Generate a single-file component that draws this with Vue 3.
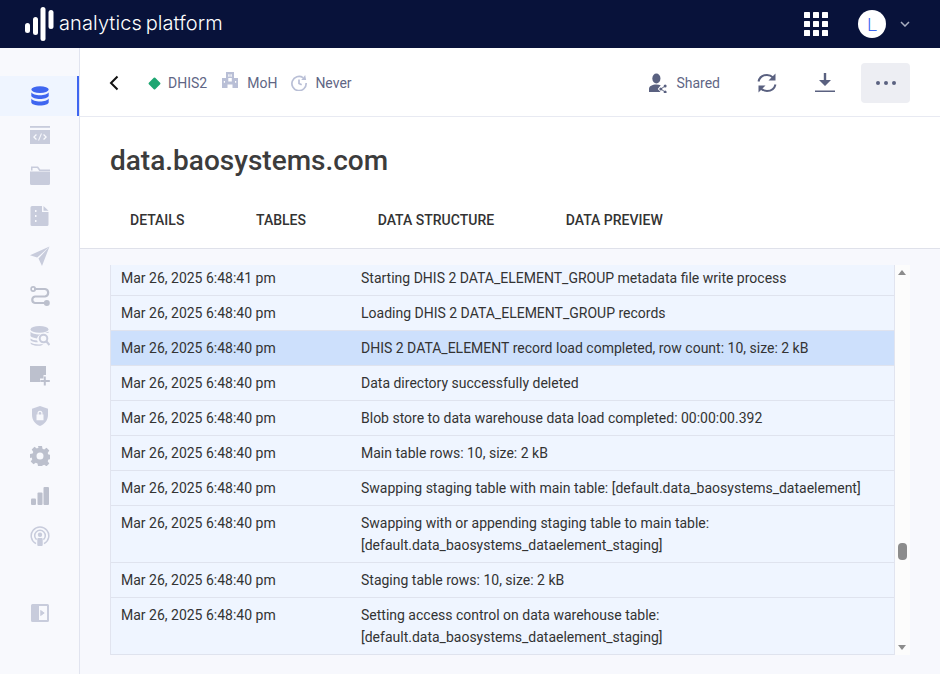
<script setup>
const navItems = [
  { name: 'data', active: true },
  { name: 'code' },
  { name: 'folder' },
  { name: 'file' },
  { name: 'send' },
  { name: 'route', muted: true },
  { name: 'search' },
  { name: 'add', muted: true },
  { name: 'shield' },
  { name: 'gear', muted: true },
  { name: 'bars', muted: true },
  { name: 'cast' }
]

const tabs = ['Details', 'Tables', 'Data structure', 'Data preview']

const rows = [
  { time: 'Mar 26, 2025 6:48:41 pm', text: 'Starting DHIS 2 DATA_ELEMENT_GROUP metadata file write process' },
  { time: 'Mar 26, 2025 6:48:40 pm', text: 'Loading DHIS 2 DATA_ELEMENT_GROUP records' },
  { time: 'Mar 26, 2025 6:48:40 pm', text: 'DHIS 2 DATA_ELEMENT record load completed, row count: 10, size: 2 kB', selected: true },
  { time: 'Mar 26, 2025 6:48:40 pm', text: 'Data directory successfully deleted' },
  { time: 'Mar 26, 2025 6:48:40 pm', text: 'Blob store to data warehouse data load completed: 00:00:00.392' },
  { time: 'Mar 26, 2025 6:48:40 pm', text: 'Main table rows: 10, size: 2 kB' },
  { time: 'Mar 26, 2025 6:48:40 pm', text: 'Swapping staging table with main table: [default.data_baosystems_dataelement]' },
  { time: 'Mar 26, 2025 6:48:40 pm', text: 'Swapping with or appending staging table to main table: [default.data_baosystems_dataelement_staging]' },
  { time: 'Mar 26, 2025 6:48:40 pm', text: 'Staging table rows: 10, size: 2 kB' },
  { time: 'Mar 26, 2025 6:48:40 pm', text: 'Setting access control on data warehouse table: [default.data_baosystems_dataelement_staging]' }
]
</script>

<template>
  <div class="app">
    <header class="topbar">
      <div class="brand">
        <svg class="brand-mark" width="30" height="36" viewBox="0 0 30 36" fill="#fff">
          <rect x="0" y="17" width="5" height="10" rx="2.5" />
          <rect x="8" y="11" width="5" height="18" rx="2.5" />
          <rect x="15.5" y="1" width="5" height="34" rx="2.5" />
          <rect x="23.5" y="4" width="5" height="19" rx="2.5" />
        </svg>
        <span class="brand-name">analytics platform</span>
      </div>
      <div class="top-right">
        <svg class="apps" width="24" height="24" viewBox="0 0 24 24" fill="#fff">
          <template v-for="y in [0, 9, 18]" :key="y">
            <rect v-for="x in [0, 9, 18]" :key="x" :x="x" :y="y" width="6" height="6" rx="0.6" />
          </template>
        </svg>
        <div class="avatar">L</div>
        <svg class="caret" width="10" height="6" viewBox="0 0 10 6" fill="none" stroke="#a9aec0" stroke-width="1.5">
          <path d="M1 1l4 4 4-4" />
        </svg>
      </div>
    </header>

    <div class="body">
      <nav class="sidebar">
        <div class="nav-list">
          <div v-for="item in navItems" :key="item.name" class="nav-item" :class="{ active: item.active, muted: item.muted }">
            <svg width="20" height="20" viewBox="0 0 20 20" fill="currentColor">
              <template v-if="item.name === 'data'">
                <ellipse cx="10" cy="3.6" rx="8.7" ry="3.4" />
                <path d="M1.3 6.2c1 2 4.600 3 8.700 3s7.700-1 8.700-3v3.900c-1 2-4.600 3-8.700 3s-7.700-1-8.700-3z" />
                <path d="M1.300 12.400c1 2 4.600 3 8.700 3s7.700-1 8.700-3v3.800c0 1.900-3.900 3.300-8.700 3.300s-8.700-1.400-8.700-3.300z" />
              </template>
              <template v-else-if="item.name === 'code'">
                <rect x="0" y="0" width="20" height="1.800" />
                <path fill-rule="evenodd" d="M0 4h20v14H0zM6 8l-3 3 3 3 .9-.9L4.800 11l2.100-2.100zM14 8l-.9.900 2.100 2.100-2.100 2.100.9.900 3-3zM10.900 7.500L8 14.500h1.100l2.900-7z" />
              </template>
              <template v-else-if="item.name === 'folder'">
                <path d="M1 1h7l2.300 3H20v1.500H9.300L7.200 2.500H2.500V5H1zM0 6h20v12a1.500 1.500 0 0 1-1.500 1.500h-17A1.500 1.500 0 0 1 0 18zM0 6h1v2H0z" transform="translate(0 -.5)" />
              </template>
              <template v-else-if="item.name === 'file'">
                <path fill-rule="evenodd" d="M2 0h10v6h6.500v12.500A1.500 1.500 0 0 1 17 20H2a1.500 1.500 0 0 1-1.500-1.500v-17A1.500 1.500 0 0 1 2 0zM5 4v2h1.500V4zM5 9v2h1.500V9zM5 14v2h1.500v-2z" />
                <path d="M13.500 0l5 4.800h-5z" />
              </template>
              <template v-else-if="item.name === 'send'">
                <path d="M19.500 0.500L0 9.300l7.200 2.300zM19.500 0.500L8.500 12.600l3.500 7.400z" />
              </template>
              <template v-else-if="item.name === 'route'">
                <path d="M4 3h11a3.800 3.800 0 0 1 0 7.500H5a3.300 3.300 0 0 0 0 6.500h10" fill="none" stroke="currentColor" stroke-width="2.200" />
                <circle cx="3.200" cy="3" r="2.100" fill="none" stroke="currentColor" stroke-width="1.600" />
                <circle cx="16.800" cy="17" r="3" />
              </template>
              <template v-else-if="item.name === 'search'">
                <ellipse cx="9.500" cy="3.400" rx="9" ry="3.400" />
                <path d="M.5 5.800c1.500 1.700 5 2.700 8.500 2.700.5 0 1 0 1.500-.1-1.800.7-3.100 2.200-3.500 4-3-.2-5.400-1-6.500-2.300z" />
                <path d="M18.500 5.800V7c-1-.4-2.200-.6-3.500-.6z" />
                <path d="M.5 12.400c1.400 1.200 3.800 1.900 6.500 2l.9 1.900c-3.100 0-6-.8-7.400-2.100z" />
                <path d="M.5 16.400c1.600 1.300 5 2 8.500 2 1.500 0 3-.1 4.300-.4-1 1.300-3 1.800-4.300 1.800-4 0-8.500-1.200-8.500-2.900z" />
                <circle cx="13.500" cy="12.500" r="3.800" fill="none" stroke="currentColor" stroke-width="2" />
                <path d="M16.300 15.300l3.200 3.700" stroke="currentColor" stroke-width="2.200" />
              </template>
              <template v-else-if="item.name === 'add'">
                <path d="M0 0h16v9h-2.500v3.500H10V16H0z" />
                <path d="M14.800 10.500v9M10.300 15h9.500" fill="none" stroke="currentColor" stroke-width="2" />
              </template>
              <template v-else-if="item.name === 'shield'">
                <path fill-rule="evenodd" d="M10 0l8 2.800V9c0 5-3.200 9-8 11-4.800-2-8-6-8-11V2.800zM6.500 8.500v5.800h7V8.500h-1V7.200a2.500 2.500 0 0 0-5 0v1.300zM8.700 8.500V7.200a1.300 1.300 0 0 1 2.600 0v1.300z" />
              </template>
              <template v-else-if="item.name === 'gear'">
                <path fill-rule="evenodd" d="M8 0h4l.5 2.700 1.700.7 2.300-1.600 2.800 2.800-1.600 2.300.7 1.700 2.600.4v4l-2.600.5-.7 1.700 1.600 2.300-2.800 2.800-2.300-1.600-1.700.7L12 20H8l-.5-2.600-1.700-.7-2.300 1.600-2.800-2.800 1.600-2.300-.7-1.700L0 12V8l2.600-.4.700-1.700-1.600-2.300 2.800-2.800 2.300 1.600 1.700-.7zM10 6.500a3.500 3.500 0 1 0 0 7 3.500 3.500 0 0 0 0-7z" />
              </template>
              <template v-else-if="item.name === 'bars'">
                <rect x="1" y="12.500" width="5" height="6.500" rx="1" />
                <rect x="7.500" y="6.500" width="5" height="12.500" rx="1" />
                <rect x="13.500" y="1" width="5.500" height="18" rx="1" />
              </template>
              <template v-else>
                <path d="M6 17.700A8.800 8.800 0 1 1 14 17.700" fill="none" stroke="currentColor" stroke-width="1.500" />
                <path d="M6.600 13.700A5.300 5.300 0 1 1 13.400 13.700" fill="none" stroke="currentColor" stroke-width="1.500" />
                <circle cx="10" cy="8.800" r="2.200" />
                <rect x="7.300" y="12" width="5.400" height="8" rx="1" />
              </template>
            </svg>
          </div>
        </div>
        <div class="nav-item collapse">
          <svg width="18" height="18" viewBox="0 0 18 18" fill="currentColor">
            <path fill-rule="evenodd" d="M1.500 0h15A1.500 1.500 0 0 1 18 1.500v15a1.500 1.500 0 0 1-1.500 1.500h-15A1.500 1.500 0 0 1 0 16.500v-15A1.500 1.500 0 0 1 1.500 0zM8 2v14h8V2zM9.500 6l4 3-4 3z" />
            <path d="M9.500 6l4 3-4 3z" />
          </svg>
        </div>
      </nav>

      <main class="main">
        <div class="toolbar">
          <div class="crumbs">
            <svg class="back" width="10" height="16" viewBox="0 0 10 16" fill="none" stroke="#111" stroke-width="2">
              <path d="M8.500 1.500L2 8l6.500 6.500" />
            </svg>
            <span class="crumb first">
              <i class="diamond"></i>
              DHIS2
            </span>
            <span class="crumb moh">
              <svg width="16" height="16" viewBox="0 0 16 16" fill="#b9bfd6">
                <path fill-rule="evenodd" d="M4 0h8v6h4v10h-5.500v-3.500h-5V16H0V6h4zM6.300 2.200v2.500h1.200V2.200zM8.500 2.200v2.500h1.200V2.200zM6.300 6v3.500h3.500V6zM1.800 9v1.800H3V9zM13 9v1.800h1.200V9z" />
              </svg>
              MoH
            </span>
            <span class="crumb never">
              <svg width="16" height="16" viewBox="0 0 18 18" fill="none" stroke="#b9bfd6" stroke-width="1.900">
                <path d="M13.500 3A8 8 0 1 0 17 9" />
                <path d="M9 5v4.500l3 1.500" />
                <path d="M11.500 5.500L17 5.500 16 0z" fill="#b9bfd6" stroke="none" />
              </svg>
              Never
            </span>
          </div>
          <div class="actions">
            <span class="action-shared">
              <svg width="18" height="20" viewBox="0 0 19.500 20" preserveAspectRatio="none" fill="#5a6180">
                <ellipse cx="8" cy="5.500" rx="4.400" ry="5" />
                <path d="M0 19v-3c0-3 3.500-4.500 8-4.500 1.800 0 3.400.2 4.700.7l-3.200 3.800 3 3z" />
                <circle cx="17.500" cy="13" r="1.600" />
                <circle cx="17.500" cy="19" r="1.600" />
                <circle cx="12.800" cy="16" r="1.600" />
                <path d="M17.500 13l-4.700 3 4.700 3" fill="none" stroke="#5a6180" stroke-width="1" />
              </svg>
              Shared
            </span>
            <button class="icon-btn sync">
              <svg width="20" height="20" viewBox="0 0 20 20" fill="none" stroke="#5a6180" stroke-width="2">
                <path d="M1.500 8.500C2.500 4.500 5.800 2 10 2c2.500 0 4.500 1 6 2.500" />
                <path d="M18.500 11.500C17.500 15.500 14.200 18 10 18c-2.500 0-4.500-1-6-2.500" />
                <path d="M18.500 .5v7h-7z" fill="#5a6180" stroke="none" />
                <path d="M1.500 19.500v-7h7z" fill="#5a6180" stroke="none" />
              </svg>
            </button>
            <button class="icon-btn download">
              <svg width="20" height="20" viewBox="0 0 20 20" fill="#5a6180">
                <path d="M8.800 0h2.400v7H16l-6 6-6-6h4.800z" />
                <rect x="0" y="17.500" width="20" height="1.500" />
              </svg>
            </button>
            <button class="more">
              <i></i><i></i><i></i>
            </button>
          </div>
        </div>

        <div class="heading">
          <h1>data.baosystems.com</h1>
          <div class="tabs">
            <span v-for="tab in tabs" :key="tab" class="tab">{{ tab }}</span>
          </div>
        </div>

        <div class="log-area">
          <div class="log">
            <div class="rows">
              <div v-for="(row, i) in rows" :key="i" class="row" :class="{ selected: row.selected }">
                <div class="time">{{ row.time }}</div>
                <div class="text">{{ row.text }}</div>
              </div>
            </div>
            <div class="scrollbar">
              <i class="arrow up"></i>
              <i class="thumb"></i>
              <i class="arrow down"></i>
            </div>
          </div>
        </div>
      </main>
    </div>
  </div>
</template>

<style scoped>
.app {
  width: 940px;
  height: 674px;
  display: flex;
  flex-direction: column;
  overflow: hidden;
  font-family: Roboto, "Liberation Sans", sans-serif;
  font-size: 14px;
  color: #333;
  background: #fff;
}

.topbar {
  height: 48px;
  flex-shrink: 0;
  background: #08123a;
  display: flex;
  align-items: center;
  justify-content: space-between;
}

.brand {
  display: flex;
  align-items: center;
  padding-left: 25px;
}

.brand-mark {
  flex-shrink: 0;
}

.brand-name {
  margin-left: 4px;
  font-family: Inter, sans-serif;
  font-weight: 300;
  font-size: 20px;
  letter-spacing: 0.1px;
  word-spacing: -2px;
  color: #fff;
  position: relative;
  top: -1px;
}

.top-right {
  display: flex;
  align-items: center;
  padding-right: 30px;
}

.avatar {
  width: 28px;
  height: 28px;
  margin-left: 30px;
  border-radius: 50%;
  background: #fff;
  color: #3f66f0;
  font-size: 19px;
  font-weight: 300;
  display: flex;
  align-items: center;
  justify-content: center;
}

.caret {
  margin-left: 14px;
}

.body {
  flex: 1;
  display: flex;
  min-height: 0;
}

.sidebar {
  width: 80px;
  flex-shrink: 0;
  box-sizing: border-box;
  background: #f8f9fd;
  border-right: 1px solid #e1e4ef;
  padding-top: 28px;
  display: flex;
  flex-direction: column;
}

.nav-item {
  height: 40px;
  display: flex;
  align-items: center;
  justify-content: center;
  padding-left: 1px;
  box-sizing: border-box;
  color: #c8ccdc;
}

.nav-item.muted {
  color: #bcc0cd;
}

.nav-item.active {
  background: #eff5ff;
  color: #3f66f0;
  box-shadow: inset -2px 0 0 #3f66f0;
}

.collapse {
  margin-top: 37px;
}

.main {
  flex: 1;
  min-width: 0;
  display: flex;
  flex-direction: column;
}

.toolbar {
  height: 69px;
  flex-shrink: 0;
  box-sizing: border-box;
  border-bottom: 1px solid #e8eaf2;
  display: flex;
  align-items: center;
  justify-content: space-between;
  padding: 2px 30px 0 29px;
}

.crumbs,
.actions,
.crumb,
.action-shared {
  display: flex;
  align-items: center;
}

.back {
  margin-right: 29px;
}

.crumb {
  gap: 8px;
  margin-right: 14px;
  color: #5f6685;
}

.crumb.first {
  margin-right: 15px;
}

.crumb.moh {
  gap: 9px;
}

.crumb.moh svg {
  margin-bottom: 6px;
}

.crumb.never svg {
  margin-bottom: 1px;
}

.diamond {
  width: 9px;
  height: 9px;
  margin: 0 1px 0 2px;
  background: #1ea672;
  border-radius: 1px;
  transform: rotate(45deg);
}

.action-shared {
  gap: 9px;
  color: #5f6685;
}

.icon-btn {
  background: none;
  border: 0;
  padding: 0;
  display: flex;
}

.sync {
  margin-left: 37px;
}

.download {
  margin-left: 38px;
}

.more {
  width: 49px;
  height: 40px;
  margin-left: 26px;
  border: 0;
  border-radius: 4px;
  background: #edeef3;
  display: flex;
  align-items: center;
  justify-content: center;
  gap: 4px;
}

.more i {
  width: 4px;
  height: 4px;
  border-radius: 50%;
  background: #5a6180;
}

.heading {
  height: 132px;
  flex-shrink: 0;
  box-sizing: border-box;
  border-bottom: 1px solid #dfe1ea;
  padding: 28px 0 0 30px;
}

h1 {
  margin: 0;
  height: 32px;
  line-height: 32px;
  font-size: 28px;
  font-weight: 500;
  color: #3c3c3c;
}

.tabs {
  display: flex;
  gap: 71.7px;
  padding: 33px 0 0 20px;
}

.tab {
  font-size: 14px;
  font-weight: 500;
  line-height: 20px;
  text-transform: uppercase;
  color: #333;
}

.log-area {
  flex: 1;
  min-height: 0;
  background: #f7f8fd;
  padding: 16px 30px 19px 30px;
}

.log {
  height: 390px;
  display: flex;
  position: relative;
}

.rows {
  flex: 1;
  min-width: 0;
  overflow: hidden;
  box-sizing: border-box;
  border-left: 1px solid #e1e4ef;
  border-right: 1px solid #e1e4ef;
}

.row {
  display: flex;
  box-sizing: border-box;
  padding: 6px 0;
  line-height: 22px;
  background: #eff5ff;
  border-bottom: 1px solid #dfe3ee;
}

.row:first-child {
  margin-top: -4px;
}

.row.selected {
  background: #cde0fc;
}

.time {
  width: 250px;
  flex-shrink: 0;
  padding-left: 10px;
  box-sizing: border-box;
}

.text {
  flex: 1;
  padding-right: 20px;
}

.scrollbar {
  width: 15px;
  flex-shrink: 0;
  background: #fcfcfc;
  position: relative;
}

.arrow {
  position: absolute;
  left: 3px;
  width: 0;
  height: 0;
  border-left: 4.5px solid transparent;
  border-right: 4.5px solid transparent;
}

.arrow.up {
  top: 5px;
  border-bottom: 5px solid #8c8c8c;
}

.arrow.down {
  bottom: 5px;
  border-top: 5px solid #8c8c8c;
}

.thumb {
  position: absolute;
  left: 3px;
  top: 278px;
  width: 9px;
  height: 17px;
  border-radius: 4px;
  background: #8c8c8c;
}
</style>

<style>
html,
body {
  margin: 0;
  background: #fff;
}
</style>
